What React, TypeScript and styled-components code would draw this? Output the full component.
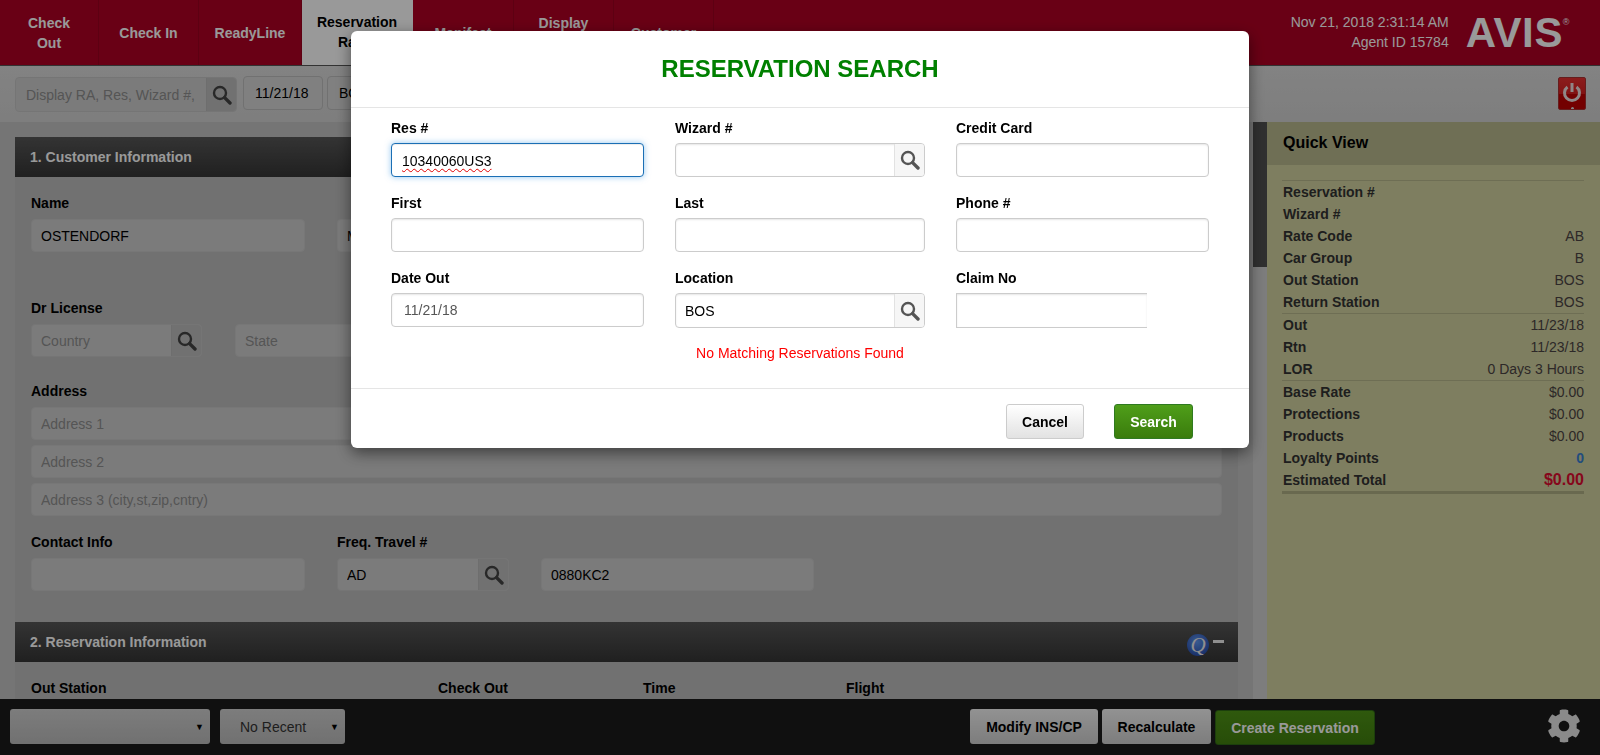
import React from "react";
import styled, { createGlobalStyle } from "styled-components";
import { FaCog } from "react-icons/fa";

const Global = createGlobalStyle`
  html, body { margin: 0; padding: 0; height: 100%; overflow: hidden; }
  body { font-family: "Liberation Sans", Arial, sans-serif; font-size: 14px; color: #000; }
  * { box-sizing: border-box; }
`;

const Page = styled.div`
  height: 100vh; display: flex; flex-direction: column; overflow: hidden; background: #c4c4c4;
`;
const Header = styled.header`
  flex: none; height: 66px; display: flex; background: #b00023; border-bottom: 1px solid #555;
`;
const Tab = styled.div<{ $w: number; $active?: boolean }>`
  width: ${p => p.$w}px; flex: none; height: 65px; padding: 12px 10px 0;
  display: flex; align-items: ${p => (p.$active ? "flex-start" : "center")}; justify-content: center;
  padding-top: ${p => (p.$active ? "12px" : "0")};
  text-align: center; font-weight: bold; line-height: 20px;
  color: ${p => (p.$active ? "#000" : "#fff")};
  background: ${p => (p.$active ? "#fff" : "transparent")};
  border-right: 1px solid ${p => (p.$active ? "transparent" : "#9c001e")};
`;
const HeaderRight = styled.div`
  margin-left: auto; display: flex; padding: 12px 37px 0 0; gap: 17px;
`;
const Stamp = styled.div`
  text-align: right; line-height: 20px; color: #fff;
`;
const Logo = styled.div`
  position: relative; margin-top: 3px; font-size: 42px; font-weight: bold; line-height: 36px; color: #fff; letter-spacing: .6px;
  sup { position: absolute; top: 3px; right: -7px; font-size: 9px; line-height: 9px; font-weight: normal; }
`;
const Toolbar = styled.div`
  flex: none; height: 56px; display: flex; align-items: flex-start; padding: 10px 14px 0 15px;
  background: linear-gradient(#dadada, #d2d2d2);
`;
const Field = styled.input<{ $w?: number }>`
  display: block; width: ${p => (p.$w ? `${p.$w}px` : "100%")}; height: 33px; padding: 0 9px;
  font: 14px "Liberation Sans", Arial, sans-serif; color: #000; outline: none;
  background: #cdcdcd; border: 1px solid #c6c6c6; border-radius: 4px;
  &::placeholder { color: #8e8e8e; opacity: 1; }
`;
const Group = styled.div<{ $w: number; $h?: number; $mt?: number }>`
  display: flex; width: ${p => p.$w}px; height: ${p => p.$h ?? 33}px; margin-top: ${p => p.$mt ?? 0}px; flex: none;
  border: 1px solid #c4c4c4; border-radius: 4px; overflow: hidden; background: #cdcdcd;
`;
const GroupInput = styled.input<{ $pad?: number }>`
  flex: 1; min-width: 0; border: 0; outline: none; background: transparent; padding: 0 ${p => p.$pad ?? 9}px;
  font: 14px "Liberation Sans", Arial, sans-serif; color: #000;
  &::placeholder { color: #8e8e8e; opacity: 1; }
`;
const Addon = styled.div<{ $w?: number }>`
  width: ${p => p.$w ?? 30}px; flex: none; display: flex; align-items: center; justify-content: center;
  background: #bdbdbd; border-left: 1px solid #b8b8b8;
`;
const ToolField = styled(Field)`
  height: 34px; margin-left: ${p => (p.$w === 80 ? 6 : 4)}px; flex: none;
  background: #d6d6d6; border-color: #bcbcbc; padding: 0 11px;
`;
const PowerBtn = styled.div`
  position: relative; margin-left: auto; width: 28px; height: 33px; margin-top: 1px; border-radius: 2px; border: 1px solid #a33;
  background: linear-gradient(#e83030 0, #d82020 50%, #c00000 51%, #c00000 100%);
  display: flex; align-items: center; justify-content: center; padding-bottom: 4px;
  &::after {
    content: ""; position: absolute; bottom: 0; left: 50%; width: 3px; height: 2px; margin-left: -1.5px;
    background: #ddd; border-radius: 2px 2px 0 0;
  }
`;
const Middle = styled.div`
  flex: 1; min-height: 0; display: flex;
`;
const Main = styled.main`
  width: 1253px; flex: none; overflow: hidden; padding: 15px 15px 0;
`;
const Sheet = styled.div`
  background: #bcbcbc;
  min-height: 100%;
`;
const Scrollbar = styled.div`
  width: 14px; flex: none; background: #d0d0d0;
`;
const Thumb = styled.div`
  height: 145px; background: #505050;
`;
const SectionBar = styled.div<{ $mt?: number }>`
  height: 40px; padding: 0 14px 0 15px; display: flex; align-items: center; justify-content: space-between;
  margin-top: ${p => p.$mt ?? 0}px;
  color: #fff; font-weight: bold; background: linear-gradient(#575757, #363636);
`;
const BarIcons = styled.div`
  align-self: flex-start; display: flex; align-items: flex-start; gap: 4px; padding-top: 12px;
`;
const QBadge = styled.div`
  width: 22px; height: 22px; border-radius: 50%;
  background: radial-gradient(circle at 45% 35%, #5f96f0, #2448a8 85%);
  color: #eee; font: italic 21px/22px "Liberation Serif", serif; text-align: center;
`;
const Minus = styled.div`
  width: 11px; height: 3px; background: #eee; margin-top: 6px;
`;
const Form = styled.div`
  padding: 16px 16px 0;
`;
const Label = styled.div`
  font-weight: bold; line-height: 20px; margin-bottom: 6px;
`;
const Row = styled.div<{ $mt?: number; $gap?: number }>`
  display: flex; gap: ${p => p.$gap ?? 32}px; margin-top: ${p => p.$mt ?? 0}px;
`;
const Col = styled.div<{ $w?: number }>`
  flex: none; ${p => (p.$w ? `width: ${p.$w}px;` : "")}
`;
const Stack = styled.div`
  display: flex; flex-direction: column; gap: 5px; width: 1191px;
`;
const LabelRow = styled.div`
  display: grid; grid-template-columns: 407px 205px 203px 1fr; padding: 16px 16px 0;
`;
const Quick = styled.aside`
  flex: 1; background: #d2d2a0;
`;
const QuickHead = styled.div`
  height: 43px; padding-left: 16px; display: flex; align-items: center; padding-bottom: 1px;
  background: #b9b98e; font-size: 16px; font-weight: bold; color: #000;
`;
const QuickBody = styled.div`
  padding: 15px 16px 0 15px;
`;
const QuickGroup = styled.div<{ $thick?: boolean }>`
  border-top: 1px solid #b8b88c;
  ${p => (p.$thick ? "border-bottom: 3px solid #b0b084;" : "")}
`;
const QRow = styled.div`
  height: 22px; display: flex; justify-content: space-between; align-items: center; color: #4a4a4a;
`;
const QKey = styled.span`
  font-weight: bold; color: #333; padding-left: 1px;
`;
const QVal = styled.span<{ $kind?: "blue" | "red" }>`
  color: ${p => (p.$kind === "blue" ? "#3a80d0" : p.$kind === "red" ? "#e00c30" : "#4c4444")};
  font-weight: ${p => (p.$kind ? "bold" : "normal")};
  font-size: ${p => (p.$kind === "red" ? "16px" : "14px")};
`;
const Footer = styled.footer`
  flex: none; height: 56px; background: #1c1c1c; display: flex; align-items: flex-start; padding: 10px 0 0 10px;
`;
const SelectBox = styled.div<{ $w: number }>`
  width: ${p => p.$w}px; height: 35px; margin-right: 10px; flex: none; border-radius: 3px; padding: 0 6px 0 20px;
  background: linear-gradient(#d0d0d0, #bcbcbc); color: #333; display: flex; align-items: center; justify-content: space-between;
  span:last-child { font-size: 9px; color: #000; }
`;
const FootBtn = styled.div<{ $w: number; $ml?: number }>`
  width: ${p => p.$w}px; margin-left: ${p => p.$ml ?? 0}px; height: 35px; flex: none; border-radius: 3px;
  background: linear-gradient(#f4f4f4, #d0d0d0); display: flex; align-items: center; justify-content: center;
  font-weight: bold; color: #000;
`;
const CreateBtn = styled(FootBtn)`
  margin-top: 1px; background: linear-gradient(#4f9416, #42800f); color: #fff; border: 1px solid #2f6a14;
`;
const GearWrap = styled.div`
  margin-left: auto; margin-right: 19px; margin-top: 0; color: #e6e6e6; line-height: 0;
`;
const Backdrop = styled.div`
  position: fixed; inset: 0; background: rgba(0, 0, 0, .4); display: flex; justify-content: center; padding-top: 31px;
`;
const Modal = styled.div`
  width: 898px; height: 417px; background: #fff; border-radius: 6px; box-shadow: 0 5px 15px rgba(0, 0, 0, .5);
  display: flex; flex-direction: column;
`;
const ModalHead = styled.div`
  height: 77px; flex: none; border-bottom: 1px solid #e5e5e5; display: flex; align-items: center; justify-content: center;
`;
const Title = styled.h1`
  margin: 0; font-size: 24px; line-height: 30px; color: #008000; font-weight: bold;
`;
const ModalGrid = styled.div`
  padding: 10px 40px 0; display: grid; grid-template-columns: 253px 250px 253px; column-gap: 31px; row-gap: 16px;
`;
const MLabel = styled.div`
  font-weight: bold; line-height: 20px; margin-bottom: 5px;
`;
const MInput = styled.input<{ $muted?: boolean; $pad?: number }>`
  display: block; width: 100%; height: 34px; padding: 0 ${p => p.$pad ?? 10}px; outline: none;
  font: 14px "Liberation Sans", Arial, sans-serif; color: ${p => (p.$muted ? "#555" : "#000")};
  background: #fff; border-radius: 4px; border: 1px solid #ccc;
  box-shadow: inset 0 1px 2px rgba(0,0,0,.1);
`;
const FocusField = styled.div`
  height: 34px; padding: 1px 10px 0; display: flex; align-items: center; background: #fff; border-radius: 4px;
  border: 1px solid #1b6fb5; box-shadow: inset 0 1px 1px rgba(0,0,0,.075), 0 0 6px rgba(102,175,233,.7);
`;
const Misspelled = styled.span`
  text-decoration: underline wavy #e00000 1px; text-underline-offset: 2px;
`;
const ClaimInput = styled(MInput)`
  width: 191px; height: 35px; border-radius: 0; border-right: 0;
`;
const MGroup = styled.div<{ $h?: number }>`
  display: flex; height: ${p => p.$h ?? 34}px; border: 1px solid #ccc; border-radius: 4px; overflow: hidden;
  box-shadow: inset 0 1px 2px rgba(0,0,0,.1);
`;
const MGroupInput = styled.input`
  flex: 1; min-width: 0; border: 0; outline: none; padding: 0 9px; background: transparent;
  font: 14px "Liberation Sans", Arial, sans-serif; color: #000;
`;
const MAddon = styled.div`
  width: 30px; flex: none; display: flex; align-items: center; justify-content: center;
  border-left: 1px solid #e2e2e2; background: #f6f6f6;
`;
const Message = styled.div`
  margin-top: 15px; height: 20px; line-height: 20px; text-align: center; color: #ff0000; flex: none;
`;
const ModalFoot = styled.div`
  margin-top: 25px; flex: 1; border-top: 1px solid #e5e5e5; display: flex; justify-content: flex-end; gap: 30px;
  padding: 15px 56px 0 0;
`;
const ModalBtn = styled.div<{ $primary?: boolean; $w: number }>`
  width: ${p => p.$w}px; height: 35px; border-radius: 3px; display: flex; align-items: center; justify-content: center;
  font-weight: bold; color: ${p => (p.$primary ? "#fff" : "#000")};
  background: ${p => (p.$primary ? "linear-gradient(#4f9e1a, #3a7c0c)" : "linear-gradient(#fff, #e2e2e2)")};
  border: 1px solid ${p => (p.$primary ? "#2f7a20" : "#ccc")};
`;

const Loupe = ({ color = "#444" }: { color?: string }) => (
  <svg width="20" height="20" viewBox="0 0 20 20" fill="none" stroke={color}>
    <circle cx="8" cy="8" r="6" strokeWidth="2.4" />
    <path d="M12.6 12.6 L18 18" strokeWidth="3.4" strokeLinecap="round" />
  </svg>
);

const Power = () => (
  <svg width="20" height="20" viewBox="0 0 20 20" fill="none" stroke="#f0e0e0" strokeWidth="3">
    <path d="M5.5 5 A7.5 7.5 0 1 0 14.5 5" strokeLinecap="butt" />
    <path d="M10 1 V10" />
  </svg>
);

type QItem = [string, string?, ("blue" | "red")?];
const quickGroups: QItem[][] = [
  [["Reservation #"], ["Wizard #"], ["Rate Code", "AB"], ["Car Group", "B"], ["Out Station", "BOS"], ["Return Station", "BOS"]],
  [["Out", "11/23/18"], ["Rtn", "11/23/18"], ["LOR", "0 Days 3 Hours"]],
  [["Base Rate", "$0.00"], ["Protections", "$0.00"], ["Products", "$0.00"], ["Loyalty Points", "0", "blue"], ["Estimated Total", "$0.00", "red"]],
];

export default function App() {
  return (
    <Page>
      <Global />
      <Header>
        <Tab $w={99}>Check<br />Out</Tab>
        <Tab $w={100}>Check In</Tab>
        <Tab $w={103}>ReadyLine</Tab>
        <Tab $w={111} $active>Reservation<br />Rates</Tab>
        <Tab $w={101}>Manifest</Tab>
        <Tab $w={100}>Display<br />Rates</Tab>
        <Tab $w={100}>Customer</Tab>
        <HeaderRight>
          <Stamp>Nov 21, 2018 2:31:14 AM<br />Agent ID 15784</Stamp>
          <Logo>AVIS<sup>®</sup></Logo>
        </HeaderRight>
      </Header>
      <Toolbar>
        <Group $w={222} $h={35} $mt={1}>
          <GroupInput $pad={10} readOnly placeholder="Display RA, Res, Wizard #," />
          <Addon><Loupe /></Addon>
        </Group>
        <ToolField $w={80} readOnly value="11/21/18" />
        <ToolField $w={100} readOnly value="BOS" />
        <PowerBtn><Power /></PowerBtn>
      </Toolbar>
      <Middle>
        <Main>
          <Sheet>
            <SectionBar>1. Customer Information</SectionBar>
            <Form>
              <Row>
                <Col $w={274}><Label>Name</Label><Field readOnly value="OSTENDORF" /></Col>
                <Col $w={274}><Label>&nbsp;</Label><Field readOnly value="M" /></Col>
              </Row>
              <Row $mt={46} $gap={33}>
                <Col $w={171}><Label>Dr License</Label>
                  <Group $w={171}><GroupInput readOnly placeholder="Country" /><Addon><Loupe /></Addon></Group>
                </Col>
                <Col $w={200}><Label>&nbsp;</Label><Field readOnly placeholder="State" /></Col>
              </Row>
              <Row $mt={24}>
                <Col>
                  <Label>Address</Label>
                  <Stack>
                    <Field readOnly placeholder="Address 1" />
                    <Field readOnly placeholder="Address 2" />
                    <Field readOnly placeholder="Address 3 (city,st,zip,cntry)" />
                  </Stack>
                </Col>
              </Row>
              <Row $mt={16}>
                <Col $w={274}><Label>Contact Info</Label><Field readOnly /></Col>
                <Col $w={172}><Label>Freq. Travel #</Label>
                  <Group $w={172}><GroupInput readOnly value="AD" /><Addon><Loupe /></Addon></Group>
                </Col>
                <Col $w={273}><Label>&nbsp;</Label><Field readOnly value="0880KC2" /></Col>
              </Row>
            </Form>
            <SectionBar $mt={31}>
              2. Reservation Information
              <BarIcons><QBadge>Q</QBadge><Minus /></BarIcons>
            </SectionBar>
            <LabelRow>
              <Label>Out Station</Label><Label>Check Out</Label><Label>Time</Label><Label>Flight</Label>
            </LabelRow>
          </Sheet>
        </Main>
        <Scrollbar><Thumb /></Scrollbar>
        <Quick>
          <QuickHead>Quick View</QuickHead>
          <QuickBody>
            {quickGroups.map((g, i) => (
              <QuickGroup key={i} $thick={i === 2}>
                {g.map(([k, v, kind]) => (
                  <QRow key={k}><QKey>{k}</QKey>{v && <QVal $kind={kind}>{v}</QVal>}</QRow>
                ))}
              </QuickGroup>
            ))}
          </QuickBody>
        </Quick>
      </Middle>
      <Footer>
        <SelectBox $w={200}><span /><span>▼</span></SelectBox>
        <SelectBox $w={125}><span>No Recent</span><span>▼</span></SelectBox>
        <FootBtn $w={128} $ml={615}>Modify INS/CP</FootBtn>
        <FootBtn $w={109} $ml={4}>Recalculate</FootBtn>
        <CreateBtn $w={160} $ml={4}>Create Reservation</CreateBtn>
        <GearWrap><FaCog size={34} /></GearWrap>
      </Footer>
      <Backdrop>
        <Modal>
          <ModalHead><Title>RESERVATION SEARCH</Title></ModalHead>
          <ModalGrid>
            <div><MLabel>Res #</MLabel><FocusField><Misspelled>10340060US3</Misspelled></FocusField></div>
            <div><MLabel>Wizard #</MLabel><MGroup><MGroupInput readOnly /><MAddon><Loupe color="#555" /></MAddon></MGroup></div>
            <div><MLabel>Credit Card</MLabel><MInput readOnly /></div>
            <div><MLabel>First</MLabel><MInput readOnly /></div>
            <div><MLabel>Last</MLabel><MInput readOnly /></div>
            <div><MLabel>Phone #</MLabel><MInput readOnly /></div>
            <div><MLabel>Date Out</MLabel><MInput $muted $pad={12} readOnly value="11/21/18" /></div>
            <div><MLabel>Location</MLabel><MGroup $h={35}><MGroupInput readOnly value="BOS" /><MAddon><Loupe color="#555" /></MAddon></MGroup></div>
            <div><MLabel>Claim No</MLabel><ClaimInput readOnly /></div>
          </ModalGrid>
          <Message>No Matching Reservations Found</Message>
          <ModalFoot>
            <ModalBtn $w={78}>Cancel</ModalBtn>
            <ModalBtn $w={79} $primary>Search</ModalBtn>
          </ModalFoot>
        </Modal>
      </Backdrop>
    </Page>
  );
}
